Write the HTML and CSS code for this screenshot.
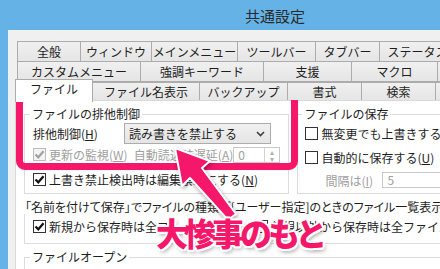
FILE: index.html
```html
<!DOCTYPE html>
<html lang="ja">
<head>
<meta charset="UTF-8" />
<title>共通設定</title>
<link rel="stylesheet" href="styles.css">
</head>
<body>

<div class="titlebar">共通設定</div>

<div class="window">
  <div class="tabs">
    <div class="tab-row row1">
      <div class="tab">全般</div>
      <div class="tab">ウィンドウ</div>
      <div class="tab">メインメニュー</div>
      <div class="tab">ツールバー</div>
      <div class="tab">タブバー</div>
      <div class="tab">ステータスバー</div>
    </div>
    <div class="tab-row row2">
      <div class="tab">カスタムメニュー</div>
      <div class="tab">強調キーワード</div>
      <div class="tab">支援</div>
      <div class="tab">マクロ</div>
      <div class="tab">プラグイン</div>
    </div>
    <div class="tab-row row3">
      <div class="tab active">ファイル</div>
      <div class="tab">ファイル名表示</div>
      <div class="tab">バックアップ</div>
      <div class="tab">書式</div>
      <div class="tab">検索</div>
      <div class="tab">編集</div>
    </div>
  </div>

  <div class="panel">
    <div class="top-groups">
      <fieldset class="group lock">
        <legend>ファイルの排他制御</legend>
        <div class="row lock-mode">
          <span class="field-label">排他制御(<u>H</u>)</span>
          <div class="combo">
            <span>読み書きを禁止する</span>
            <svg width="9" height="6" viewBox="0 0 9 6"><polyline points="1,1 4.5,4.5 8,1" fill="none" stroke="#404040" stroke-width="1.6"/></svg>
          </div>
        </div>
        <div class="row lock-watch disabled">
          <span class="check on"></span>
          <span class="watch-label">更新の監視(<u>W</u>)</span>
          <span class="delay-label">自動読込時遅延(<u>A</u>)</span>
          <div class="spin delay-spin">
            <span class="spin-value">0</span>
            <span class="spin-btns"><i>▴</i><i>▾</i></span>
          </div>
        </div>
        <div class="row lock-ro">
          <span class="check on"></span>
          <span>上書き禁止検出時は編集禁止にする(<u>N</u>)</span>
        </div>
      </fieldset>

      <fieldset class="group save">
        <legend>ファイルの保存</legend>
        <div class="row save-force">
          <span class="check"></span>
          <span>無変更でも上書きする(<u>S</u>)</span>
        </div>
        <div class="row save-auto">
          <span class="check"></span>
          <span>自動的に保存する(<u>U</u>)</span>
        </div>
        <div class="row save-interval disabled">
          <span class="interval-label">間隔は(<u>I</u>)</span>
          <div class="spin interval-spin">
            <span class="spin-value">5</span>
          </div>
        </div>
      </fieldset>
    </div>

    <fieldset class="group list">
      <legend>「名前を付けて保存」でファイルの種類が[ユーザー指定]のときのファイル一覧表示</legend>
      <div class="row list-opts">
        <span class="check on"></span>
        <span class="opt-new">新規から保存時は全ファイル表示</span>
        <span class="check"></span>
        <span>新規以外から保存時は全ファイル表示</span>
      </div>
    </fieldset>

    <fieldset class="group open">
      <legend>ファイルオープン</legend>
    </fieldset>
  </div>
</div>

<!-- annotation layered over the dialog -->
<div class="callout"></div>
<svg class="arrow" width="440" height="269" viewBox="0 0 440 269">
  <polygon points="175,148 210,161 202,168 236,214 228,220 190,178 182,186" fill="#f5176a" stroke="#fff" stroke-width="2" stroke-linejoin="round"/>
</svg>
<div class="caption">大惨事のもと</div>

</body>
</html>
```

FILE: styles.css
```css
* {
  box-sizing: border-box;
  margin: 0;
  padding: 0;
}
body {
  position: relative;
  width: 440px;
  height: 269px;
  overflow: hidden;
  background: #65b3e6;
  font-family: "Noto Sans CJK JP", "Noto Sans", sans-serif;
  font-size: 12px;
  color: #1e1e1e;
}
u {
  text-decoration: underline;
  text-underline-offset: 1px;
}

/* Title bar */
.titlebar {
  height: 30px;
  padding-left: 245px;
  font-size: 15px;
  line-height: 31px;
  color: #2a2a2a;
}

/* Dialog body */
.window {
  margin-left: 8px;
  height: 239px;
  padding-top: 11px;
  background: #f0f0f0;
}

/* Tabs */
.tab-row {
  display: flex;
  height: 21px;
}
.row1 {
  margin-left: 9px;
}
.row2 {
  margin-left: 9px;
  margin-top: -1px;
}
.row3 {
  position: relative;
  z-index: 1;
  margin-left: 7px;
  margin-top: -3px;
  align-items: flex-end;
}
.tab {
  flex: none;
  height: 21px;
  margin-left: -1px;
  border: 1px solid #acacac;
  background: linear-gradient(#f0f0f0, #e5e5e5);
  text-align: center;
  line-height: 19px;
  white-space: nowrap;
  overflow: hidden;
}
.tab:first-child {
  margin-left: 0;
}
.row1 .tab:nth-child(1) { width: 64px; }
.row1 .tab:nth-child(2) { width: 72px; }
.row1 .tab:nth-child(3) { width: 87px; }
.row1 .tab:nth-child(4) { width: 79px; }
.row1 .tab:nth-child(5) { width: 65px; }
.row1 .tab:nth-child(6) { width: 101px; }
.row2 .tab:nth-child(1) { width: 124px; }
.row2 .tab:nth-child(2) { width: 124px; }
.row2 .tab:nth-child(3) { width: 89px; }
.row2 .tab:nth-child(4) { width: 87px; }
.row2 .tab:nth-child(5) { width: 80px; }
.row3 .tab {
  height: 18px;
  border-bottom: none;
  line-height: 17px;
}
.row3 .tab:nth-child(1) { width: 78px; }
.row3 .tab:nth-child(2) { width: 108px; }
.row3 .tab:nth-child(3) { width: 89px; }
.row3 .tab:nth-child(4) { width: 75px; }
.row3 .tab:nth-child(5) { width: 75px; }
.row3 .tab:nth-child(6) { width: 70px; }
.row3 .tab.active {
  height: 23px;
  margin-bottom: -2px;
  background: #fff;
  line-height: 18px;
}

/* Tab page */
.panel {
  width: 470px;
  height: 200px;
  margin-left: 7px;
  padding: 6px 0 0 8px;
  background: #fff;
  border: 1px solid #d9d9d9;
}
.top-groups {
  display: flex;
  gap: 8px;
}
.group {
  min-width: 0;
  padding: 0 8px;
  border: 1px solid #dcdcdc;
}
.group legend {
  margin-left: -3px;
  padding: 0 2px;
  line-height: 14px;
}
.lock {
  width: 285px;
  height: 87px;
}
.save {
  width: 200px;
  height: 87px;
  padding-left: 7px;
}
.list {
  width: 460px;
  height: 44px;
  margin-top: 6px;
}
.list legend {
  margin-left: -9px;
  padding: 0 1px;
  font-feature-settings: "palt";
}
.open {
  width: 460px;
  height: 40px;
  margin-top: 6px;
}

.row {
  display: flex;
  align-items: center;
  white-space: nowrap;
}
.disabled {
  color: #a0a0a0;
}

/* Checkboxes */
.check {
  flex: none;
  width: 13px;
  height: 13px;
  margin-right: 3px;
  border: 1px solid #333;
  background: #fff;
}
.check.on {
  background: #fff url("data:image/svg+xml,%3Csvg xmlns='http://www.w3.org/2000/svg' width='11' height='11'%3E%3Cpath d='M1.5 5.5 L4.3 8.3 L9.5 2.3' fill='none' stroke='%23111' stroke-width='2.2'/%3E%3C/svg%3E") center no-repeat;
}
.disabled .check {
  border-color: #bcbcbc;
  background-color: #f4f4f4;
}
.disabled .check.on {
  background-image: url("data:image/svg+xml,%3Csvg xmlns='http://www.w3.org/2000/svg' width='11' height='11'%3E%3Cpath d='M1.5 5.5 L4.3 8.3 L9.5 2.3' fill='none' stroke='%23a0a0a0' stroke-width='2.2'/%3E%3C/svg%3E");
}

/* Lock group rows */
.lock-mode {
  height: 21px;
  margin-top: 2px;
}
.field-label {
  width: 91px;
}
.combo {
  display: flex;
  align-items: center;
  justify-content: space-between;
  width: 147px;
  height: 21px;
  padding: 0 5px 0 4px;
  border: 1px solid #acacac;
  background: linear-gradient(#f0f0f0, #e5e5e5);
  color: #1e1e1e;
}
.lock-watch {
  height: 17px;
  margin-top: 2px;
}
.watch-label {
  width: 94px;
}
.delay-label {
  width: 104px;
}
.spin {
  display: flex;
  height: 16px;
  border: 1px solid #c8c8c8;
  background: #fff;
}
.spin-value {
  flex: 1;
  padding-left: 4px;
  line-height: 14px;
  color: #a0a0a0;
}
.delay-spin {
  width: 52px;
}
.spin-btns {
  display: flex;
  flex-direction: column;
  width: 15px;
  border-left: 1px solid #d4d4d4;
  font-size: 8px;
  line-height: 7px;
  text-align: center;
  color: #b0b0b0;
}
.spin-btns i {
  font-style: normal;
}
.lock-ro {
  height: 16px;
  margin-top: 8px;
}

/* Save group rows */
.save-force {
  height: 15px;
  margin-top: 5px;
}
.save-auto {
  height: 15px;
  margin-top: 9px;
}
.save-interval {
  height: 16px;
  margin-top: 7px;
  padding-left: 20px;
}
.interval-label {
  width: 57px;
}
.interval-spin {
  width: 70px;
}

/* List group */
.list-opts {
  height: 15px;
  margin-top: 5px;
}
.opt-new {
  width: 209px;
}

/* Annotation */
.callout {
  position: absolute;
  left: 16px;
  top: 92px;
  width: 282px;
  height: 78px;
  border: 7px solid #f5176a;
  border-radius: 9px;
  box-shadow: 0 0 1px rgba(0, 0, 0, 0.3);
}
.arrow {
  position: absolute;
  left: 0;
  top: 0;
  filter: drop-shadow(1px 2px 2px rgba(0, 0, 0, 0.35));
}
.caption {
  position: absolute;
  left: 156px;
  top: 210px;
  font-size: 32px;
  font-weight: 900;
  letter-spacing: -4px;
  line-height: 44px;
  color: #f5176a;
  white-space: nowrap;
  text-shadow:
    2px 0 #fff, -2px 0 #fff, 0 2px #fff, 0 -2px #fff,
    1.5px 1.5px #fff, -1.5px 1.5px #fff, 1.5px -1.5px #fff, -1.5px -1.5px #fff,
    2px 3px 4px rgba(0, 0, 0, 0.4);
}
```
